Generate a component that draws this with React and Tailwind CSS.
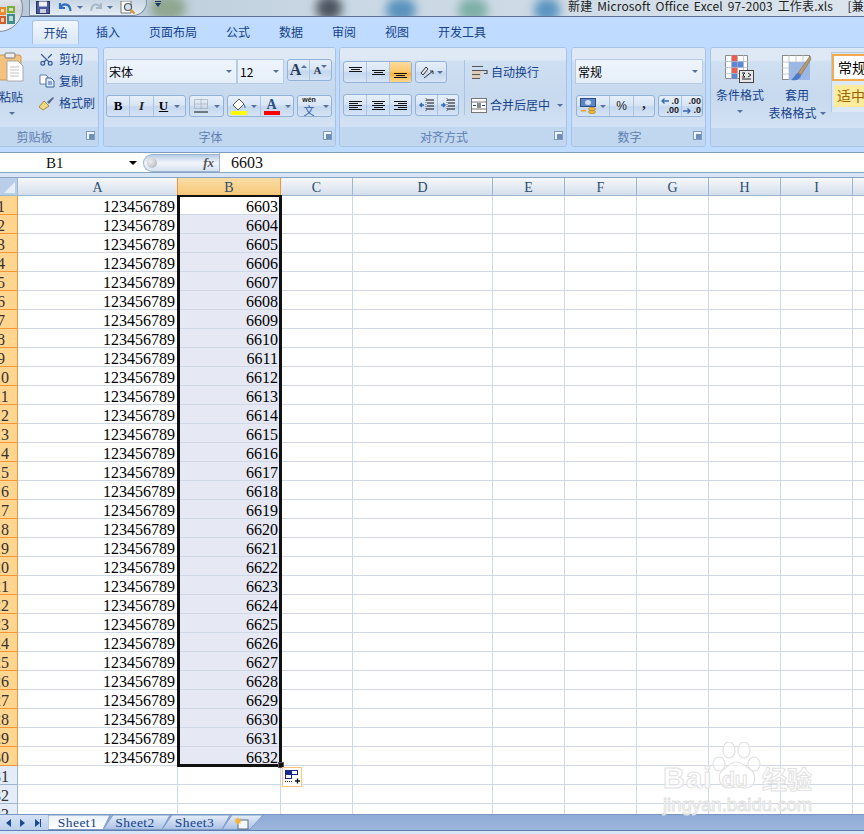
import React from "react";
import { Scissors } from "lucide-react";

const COLS = [160, 103, 72, 140, 72, 72, 72, 72, 72, 72];
const LETTERS = ["A", "B", "C", "D", "E", "F", "G", "H", "I", "J"];
const ROWS = Array.from({ length: 33 }, (_, i) => i + 1);
const CJK = "font-['Noto_Sans_CJK_SC','Noto_Sans',sans-serif]";
const SERIF = "font-['Liberation_Serif','Noto_Sans_CJK_SC',serif]";

function Arrow({ className = "" }) {
  return <span className={"inline-block w-0 h-0 border-x-[3.5px] border-x-transparent border-t-[3.5px] border-t-[#56719c] " + className} />;
}

function Group({ w, label, launcher = true, children, className = "" }) {
  return (
    <div className={"shrink-0 h-[100px] flex flex-col rounded-[3px] border border-[#a8c3e2] overflow-hidden " + className} style={{ width: w }}>
      <div className="h-[80px] relative bg-[linear-gradient(#dfe9f6_0,#dfe9f6_14%,#cfdff2_18%,#c7d9ee_60%,#d3e2f4_100%)]">{children}</div>
      <div className={"flex-1 relative flex items-center justify-center pt-[1px] pr-[18px] bg-[#c1d6ef] text-[12px] text-[#5d80b0] " + CJK}>
        {label}
        {launcher && (
          <svg className="absolute right-[3px] top-[4px]" width="9" height="9" viewBox="0 0 9 9">
            <rect x="0.5" y="0.5" width="8" height="8" fill="#eef4fb" stroke="#7f9cc0" />
            <rect x="3" y="3" width="5" height="5" fill="#6f8db5" />
          </svg>
        )}
      </div>
    </div>
  );
}

function BtnGroup({ children, className = "", h = "h-[22px]" }) {
  return <div className={"flex rounded-[3px] border border-[#93b2d8] bg-[linear-gradient(#e6eff9,#d8e5f5_45%,#c4d7ef_55%,#d6e4f5)] overflow-hidden " + h + " " + className}>{children}</div>;
}

function Cell({ w, last, active, children }) {
  return (
    <div className={"flex items-center justify-center gap-[3px] shrink-0 " + (last ? "" : "border-r border-[#adc5e2] ") + (active ? "bg-[linear-gradient(#fedb9c,#fdc869_50%,#fbb13a_55%,#fdd68a)]" : "")} style={{ width: w }}>
      {children}
    </div>
  );
}

function Lines({ rows, w = 16, h = 14 }) {
  return (
    <svg width={w} height={h} viewBox={`0 0 ${w} ${h}`}>
      {rows.map(([x1, x2, y], i) => (
        <line key={i} x1={x1} x2={x2} y1={y + 0.5} y2={y + 0.5} stroke="#111" strokeWidth="1" />
      ))}
    </svg>
  );
}

function Combo({ w, text }) {
  return (
    <div className="h-[25px] flex items-center justify-between pl-[2px] pr-[4px] bg-[linear-gradient(#eef4fc,#e6eff9)] border border-[#b5cbe6]" style={{ width: w }}>
      <span className={"text-[12px] text-black " + CJK}>{text}</span>
      <Arrow />
    </div>
  );
}

function Clipboard() {
  const Row = ({ icon, text }) => (
    <div className="h-[22px] flex items-center gap-[4px]">
      <span className="w-[17px] flex justify-center">{icon}</span>
      <span className={"text-[12px] text-[#15428b] " + CJK}>{text}</span>
    </div>
  );
  return (
    <Group w={111} label="剪贴板" className="-ml-[12px]">
      <div className="flex h-full pl-[12px]">
        <div className="w-[23px] relative shrink-0">
          <svg className="absolute -left-[3px] top-[4px]" width="28" height="32" viewBox="0 0 28 32">
            <rect x="1" y="3" width="22" height="25" rx="2" fill="#f3c27d" stroke="#c9975a" />
            <rect x="7" y="1" width="10" height="5" rx="1" fill="#eee" stroke="#7d7d7d" />
            <path d="M9 9h11l5 5v15H9z" fill="#fff" stroke="#a8a8a8" />
            <path d="M12 15h9M12 18h9M12 21h9M12 24h9" stroke="#c4c4c4" />
          </svg>
          <div className={"absolute -left-[2px] top-[41px] w-[28px] text-[12px] leading-[16px] text-[#15428b] whitespace-nowrap " + CJK}>粘贴</div>
          <Arrow className="absolute left-[8px] top-[64px]" />
        </div>
        <div className="ml-[14px] flex flex-col">
          <Row icon={<Scissors size={15} color="#3c5a94" className="rotate-[-90deg]" />} text="剪切" />
          <Row icon={
            <svg width="16" height="14" viewBox="0 0 16 14">
              <path d="M1 1h6l2 2v7H1z" fill="#fff" stroke="#5a7fb4" />
              <path d="M7 4h5l3 3v6H7z" fill="#dfeafa" stroke="#3e639c" />
              <path d="M9 8h4M9 10h4" stroke="#3e639c" />
            </svg>} text="复制" />
          <Row icon={
            <svg width="17" height="15" viewBox="0 0 17 15">
              <path d="M1 11l5-6 5 5-6 4z" fill="#f2d880" stroke="#a48a3c" />
              <path d="M9 6l6-5 1 1-5 6z" fill="#58698c" />
            </svg>} text="格式刷" />
        </div>
      </div>
    </Group>
  );
}

function FontGroup() {
  return (
    <Group w={233} label="字体">
      <div className="pt-[11px] pl-[2px] flex flex-col gap-[11px]">
        <div className="flex items-start">
          <Combo w={131} text="宋体" />
          <Combo w={47} text="12" />
          <BtnGroup className="ml-[3px]" h="h-[22px]">
            <Cell w={22}>
              <span className="font-['Liberation_Serif',serif] font-bold text-[16px] text-[#2b3a55]">A</span>
              <span className="-ml-[3px] -mt-[8px] w-0 h-0 border-x-[3px] border-x-transparent border-b-[3px] border-b-[#56719c]" />
            </Cell>
            <Cell w={21} last>
              <span className="font-['Liberation_Serif',serif] font-bold text-[11px] text-[#2b3a55]">A</span>
              <Arrow className="-ml-[3px] -mt-[8px]" />
            </Cell>
          </BtnGroup>
        </div>
        <div className="flex">
          <BtnGroup className="w-[80px]">
            <Cell w={23}><span className="font-['Liberation_Serif',serif] font-bold text-[13px] text-black">B</span></Cell>
            <Cell w={24}><span className="font-['Liberation_Serif',serif] italic font-bold text-[13px] text-[#222]">I</span></Cell>
            <Cell w={31} last><span className="font-['Liberation_Serif',serif] font-bold underline text-[13px] text-black">U</span><Arrow className="ml-[3px]" /></Cell>
          </BtnGroup>
          <BtnGroup className="w-[35px] ml-[3px]">
            <Cell w={33} last>
              <svg width="14" height="14" viewBox="0 0 14 14">
                <path d="M0.5 0.5h13v9h-13zM7 0.5v9M0.5 5h13" fill="none" stroke="#9a9a9a" strokeDasharray="1 1" />
                <line x1="0" x2="14" y1="13" y2="13" stroke="#111" />
              </svg>
              <Arrow className="ml-[3px]" />
            </Cell>
          </BtnGroup>
          <BtnGroup className="w-[67px] ml-[3px]">
            <Cell w={33}>
              <svg width="17" height="17" viewBox="0 0 17 17">
                <path d="M2 7l6-6 5 5-6 6z" fill="#fff" stroke="#555" />
                <path d="M13 6c2 2 2 4 1 4s-1-2-1-4z" fill="#4e79b6" />
                <rect x="0" y="13" width="16" height="4" fill="#ffff00" />
              </svg>
              <Arrow />
            </Cell>
            <Cell w={32} last>
              <div className="flex flex-col items-center w-[16px]">
                <span className="font-['Liberation_Serif',serif] font-bold text-[14px] leading-[13px] text-[#2c4d86]">A</span>
                <span className="w-[16px] h-[4px] bg-[#ff0000]" />
              </div>
              <Arrow className="ml-[2px]" />
            </Cell>
          </BtnGroup>
          <BtnGroup className="w-[35px] ml-[3px]">
            <Cell w={33} last>
              <div className="flex flex-col items-center w-[17px] leading-none">
                <span className="font-['Liberation_Sans',sans-serif] font-bold text-[7px] leading-[8px] text-[#222]">wén</span>
                <span className={"text-[11px] leading-[12px] text-[#2a57a5] " + CJK}>文</span>
              </div>
              <Arrow className="ml-[2px]" />
            </Cell>
          </BtnGroup>
        </div>
      </div>
    </Group>
  );
}

function AlignGroup() {
  return (
    <Group w={228} label="对齐方式">
      <div className="flex pl-[3px] pt-[13px]">
        <div className="flex flex-col gap-[11px] w-[116px]">
          <div className="flex">
            <BtnGroup className="w-[69px]">
              <Cell w={23}><Lines rows={[[1, 14, 2], [3, 12, 4], [1, 14, 6]]} h={14} w={15} /></Cell>
              <Cell w={23}><Lines rows={[[1, 14, 5], [3, 12, 7], [1, 14, 9]]} h={14} w={15} /></Cell>
              <Cell w={21} last active><Lines rows={[[1, 14, 8], [3, 12, 10], [1, 14, 12]]} h={14} w={15} /></Cell>
            </BtnGroup>
            <BtnGroup className="w-[32px] ml-[3px]">
              <Cell w={30} last>
                <svg width="15" height="15" viewBox="0 0 15 15">
                  <path d="M2 8l5-6 2 2-5 6z" fill="#dfe6f0" stroke="#333" />
                  <path d="M5 13l9-7M11 6h3v3" fill="none" stroke="#333" />
                </svg>
                <Arrow />
              </Cell>
            </BtnGroup>
          </div>
          <div className="flex">
            <BtnGroup className="w-[69px]">
              <Cell w={23}><Lines rows={[[1, 14, 2], [1, 10, 4], [1, 14, 6], [1, 10, 8], [1, 14, 10]]} h={13} w={15} /></Cell>
              <Cell w={23}><Lines rows={[[1, 14, 2], [3, 12, 4], [1, 14, 6], [3, 12, 8], [1, 14, 10]]} h={13} w={15} /></Cell>
              <Cell w={21} last><Lines rows={[[1, 14, 2], [5, 14, 4], [1, 14, 6], [5, 14, 8], [1, 14, 10]]} h={13} w={15} /></Cell>
            </BtnGroup>
            <BtnGroup className="w-[44px] ml-[3px]">
              <Cell w={22}>
                <svg width="16" height="14" viewBox="0 0 16 14">
                  <path d="M7 2h8M8 5h7M8 8h7M7 11h8" stroke="#111" strokeWidth="1.2" />
                  <path d="M7 0v14" stroke="#111" strokeWidth="0.6" strokeDasharray="1 1" />
                  <path d="M5 7H1M3 5L1 7l2 2" fill="none" stroke="#3467b5" strokeWidth="1.4" />
                </svg>
              </Cell>
              <Cell w={20} last>
                <svg width="16" height="14" viewBox="0 0 16 14">
                  <path d="M7 2h8M8 5h7M8 8h7M7 11h8" stroke="#111" strokeWidth="1.2" />
                  <path d="M7 0v14" stroke="#111" strokeWidth="0.6" strokeDasharray="1 1" />
                  <path d="M1 7h4M3 5l2 2-2 2" fill="none" stroke="#3467b5" strokeWidth="1.4" />
                </svg>
              </Cell>
            </BtnGroup>
          </div>
        </div>
        <div className="w-px h-[55px] bg-[#aac3e0] ml-[5px] -mt-[1px]" />
        <div className="ml-[6px] flex flex-col gap-[11px]">
          <div className="h-[22px] flex items-center gap-[3px]">
            <svg width="17" height="15" viewBox="0 0 17 15">
              <rect x="1" y="5" width="9" height="8" fill="#e8c28b" fillOpacity="0.6" />
              <path d="M1 1.5h11M1 5.5h15v3h-3M1 9.5h8M1 13.5h8" fill="none" stroke="#555" strokeWidth="1.2" />
            </svg>
            <span className={"text-[12px] text-[#15428b] " + CJK}>自动换行</span>
          </div>
          <div className="h-[22px] flex items-center gap-[3px]">
            <svg width="16" height="15" viewBox="0 0 16 15">
              <rect x="0.5" y="0.5" width="15" height="14" fill="#fff" stroke="#777" />
              <path d="M0 4h16M0 11h16" stroke="#777" />
              <path d="M2 7.5h3M11 7.5h3" stroke="#234d8b" strokeWidth="1.2" />
              <rect x="6" y="5" width="4" height="5" fill="#888" />
            </svg>
            <span className={"text-[12px] text-[#15428b] " + CJK}>合并后居中</span>
            <Arrow className="ml-[4px]" />
          </div>
        </div>
      </div>
    </Group>
  );
}

function NumberGroup() {
  return (
    <Group w={135} label="数字">
      <div className="pt-[11px] pl-[3px] flex flex-col gap-[11px]">
        <Combo w={128} text="常规" />
        <div className="flex pl-[1px]">
          <BtnGroup className="w-[79px]">
            <Cell w={33}>
              <svg width="17" height="16" viewBox="0 0 17 16">
                <rect x="0.5" y="0.5" width="15" height="8" fill="#5f86c4" stroke="#2e4f88" />
                <ellipse cx="8" cy="4.5" rx="3" ry="2.5" fill="#cfe0f6" />
                <ellipse cx="12" cy="11" rx="3.5" ry="1.7" fill="#eeb63c" stroke="#9a7416" strokeWidth="0.5" />
                <ellipse cx="12" cy="14" rx="3.5" ry="1.7" fill="#eeb63c" stroke="#9a7416" strokeWidth="0.5" />
                <rect x="1" y="12" width="5" height="1.5" fill="#e0a42f" />
              </svg>
              <Arrow />
            </Cell>
            <Cell w={24}><span className="font-['Liberation_Sans',sans-serif] text-[12px] text-[#222]">%</span></Cell>
            <Cell w={20} last><span className="font-['Liberation_Serif',serif] font-bold text-[14px] -mt-[5px] text-[#222]">,</span></Cell>
          </BtnGroup>
          <BtnGroup className="w-[45px] ml-[3px]">
            <Cell w={23}>
              <div className="font-['Liberation_Sans',sans-serif] font-bold text-[9px] leading-[9px] text-[#222] text-right w-[18px] relative">
                <svg className="absolute left-0 top-[1px]" width="8" height="6" viewBox="0 0 8 6">
                  <path d="M8 3H1M3.5 0.5L1 3l2.5 2.5" fill="none" stroke="#3467b5" strokeWidth="1.3" />
                </svg>
                .0<br />.00
              </div>
            </Cell>
            <Cell w={20} last>
              <div className="font-['Liberation_Sans',sans-serif] font-bold text-[9px] leading-[9px] text-[#222] text-right w-[18px] relative">
                .00<br />.0
                <svg className="absolute left-0 bottom-[1px]" width="8" height="6" viewBox="0 0 8 6">
                  <path d="M0 3h7M4.5 0.5L7 3 4.5 5.5" fill="none" stroke="#3467b5" strokeWidth="1.3" />
                </svg>
              </div>
            </Cell>
          </BtnGroup>
        </div>
      </div>
    </Group>
  );
}

function StylesGroup() {
  return (
    <Group w={170} label="" launcher={false}>
      <div className="flex h-full">
        <div className="w-[58px] shrink-0 flex flex-col items-center pt-[7px]">
          <svg width="30" height="28" viewBox="0 0 30 28">
            <path d="M0.5 0.5h22v23h-22z" fill="#fff" stroke="#8b8b8b" />
            <rect x="6.5" y="0.5" width="6" height="6" fill="#ef5a4f" />
            <rect x="6.5" y="6.5" width="12" height="6" fill="#5d87d6" />
            <rect x="6.5" y="12.5" width="6" height="6" fill="#ef5a4f" />
            <rect x="6.5" y="18.5" width="6" height="5" fill="#5d87d6" />
            <path d="M6.5 0v24M12.5 0v24M18.5 0v24M0 6.5h23M0 12.5h23M0 18.5h23" stroke="#a8b4c4" strokeWidth="0.7" />
            <rect x="14.5" y="15.5" width="14" height="12" fill="#e8e8e8" stroke="#444" />
            <path d="M17 18h3l-2 2 2 2h-3M23 18l3 2-3 2M17 24h9" fill="none" stroke="#222" />
          </svg>
          <span className={"mt-[3px] text-[12px] leading-[18px] text-[#15428b] whitespace-nowrap " + CJK}>条件格式</span>
          <Arrow className="mt-[6px]" />
        </div>
        <div className="w-[56px] shrink-0 flex flex-col items-center pt-[7px]">
          <svg width="30" height="28" viewBox="0 0 30 28">
            <rect x="0.5" y="0.5" width="27" height="24" fill="#fff" stroke="#8b8b8b" />
            <rect x="7" y="7" width="21" height="18" fill="#9bb8ec" />
            <path d="M7 0v25M14 0v25M21 0v25M0 7h28M0 13h28M0 19h28" stroke="#a8b4c4" strokeWidth="0.7" />
            <path d="M28 1L16 18l3 2L29 4z" fill="#b99a6a" stroke="#6f5a3a" strokeWidth="0.5" />
            <path d="M16 18c-3 1-4 5-7 7 5 1 10-1 10-5z" fill="#4e79c4" />
          </svg>
          <span className={"mt-[3px] text-[12px] leading-[18px] text-[#15428b] " + CJK}>套用</span>
          <div className="flex items-center whitespace-nowrap">
            <span className={"text-[12px] leading-[18px] text-[#15428b] " + CJK}>表格格式</span>
            <Arrow className="ml-[3px]" />
          </div>
        </div>
        <div className="ml-[6px] border-l border-t border-[#b3cae6] mt-[4px] w-[60px] h-[60px] bg-[#dce8f6] flex flex-col shrink-0">
          <div className={"mt-[1px] h-[27px] border-2 border-[#f5a94a] bg-white text-[14px] leading-[22px] text-black pl-[4px] whitespace-nowrap " + CJK}>常规</div>
          <div className={"mt-[4px] ml-[2px] h-[22px] bg-[#ffeb9c] text-[14px] leading-[20px] text-[#9c6500] pl-[3px] whitespace-nowrap " + CJK}>适中</div>
        </div>
      </div>
    </Group>
  );
}

function TitleBar() {
  return (
    <div className="h-[17px] shrink-0 relative overflow-hidden border-b border-[#5f7390] bg-[linear-gradient(90deg,#b9c8d6,#c9d8e4_40%,#cfdbe6_65%,#dce5ed)]">
      <div className="absolute left-[150px] -top-[4px] w-[36px] h-[24px] rounded-full bg-[#8fa68f] blur-[5px]" />
      <div className="absolute left-[316px] -top-[4px] w-[26px] h-[24px] rounded-full bg-[#4d5560] blur-[5px]" />
      <div className="absolute left-[386px] -top-[2px] w-[30px] h-[24px] rounded-full bg-[#5b93bd] blur-[5px]" />
      <div className="absolute left-[458px] -top-[2px] w-[30px] h-[24px] rounded-full bg-[#7fb0a8] blur-[5px]" />
      <div className="absolute left-[534px] -top-[2px] w-[26px] h-[24px] rounded-full bg-[#5a95c0] blur-[5px]" />
      <div className={"relative pl-[568px] text-[12px] leading-[12px] tracking-[0.15px] [word-spacing:2px] text-[#222] whitespace-nowrap " + CJK}>新建 Microsoft Office Excel 97-2003 工作表.xls&nbsp;&nbsp;&nbsp;[兼容模式]</div>
    </div>
  );
}

function Qat() {
  return (
    <div className="absolute left-[29px] top-0 h-[16px] w-[118px] rounded-br-[14px] border-r border-b border-l border-[#7f91a8] bg-[linear-gradient(#c9d6e4,#e4ecf4)] flex items-center pl-[6px]">
      <svg width="14" height="13" viewBox="0 0 14 13">
        <rect x="0.5" y="0.5" width="13" height="12" fill="#4c5a9c" stroke="#2a3468" />
        <rect x="3" y="0.5" width="8" height="5" fill="#eef2f8" />
        <rect x="4" y="8" width="6" height="4" fill="#c8cfe0" />
      </svg>
      <svg width="15" height="13" viewBox="0 0 15 13" className="ml-[8px]">
        <path d="M2 2v5h5M2.5 6.5C5 2 12 2 12.5 10" fill="none" stroke="#2d6fc0" strokeWidth="2.2" />
      </svg>
      <Arrow className="ml-[4px]" />
      <svg width="14" height="13" viewBox="0 0 14 13" className="ml-[6px]">
        <path d="M12 2v5H7M11.5 6.5C9 2 3 2 2 10" fill="none" stroke="#a8b8c8" strokeWidth="2" />
      </svg>
      <Arrow className="ml-[4px] border-t-[#9aa8b8]" />
      <svg width="16" height="14" viewBox="0 0 16 14" className="ml-[7px]">
        <path d="M1 0h10v12H1z" fill="#fff" stroke="#777" />
        <circle cx="8" cy="6" r="3.5" fill="#cfe0f2" stroke="#555" strokeWidth="1.2" />
        <path d="M10.5 8.5l4 4" stroke="#d8932c" strokeWidth="2.2" />
      </svg>
      <div className="absolute -right-[15px] top-[1px] w-[7px] flex flex-col items-center gap-[1px]">
        <span className="w-[6px] h-px bg-[#1f3a68]" />
        <span className="w-0 h-0 border-x-[3px] border-x-transparent border-t-[4px] border-t-[#1f3a68]" />
      </div>
    </div>
  );
}

function OfficeButton() {
  return (
    <div className="absolute -left-[25px] -top-[16px] w-[48px] h-[48px] rounded-full border border-[#7f8a9a] bg-[linear-gradient(#fafbfc,#d0d5dc_55%,#f2f4f7)] flex items-center justify-center">
      <svg width="17" height="20" viewBox="0 0 17 20" className="ml-[17px] mt-[16px]">
        <rect x="0" y="1" width="7" height="8" fill="#e98a2a" />
        <rect x="8" y="0" width="8" height="7" fill="#7dab3c" />
        <rect x="0" y="10" width="7" height="8" fill="#d35b2a" />
        <rect x="8" y="8" width="8" height="10" fill="#3f8d8c" />
        <path d="M2 3h3v3H2zM10 2h4v3h-4zM2 12h3v4H2zM10 10h4v5h-4z" fill="#fff" fillOpacity="0.65" />
      </svg>
    </div>
  );
}

function TabsRow() {
  const tabs = ["插入", "页面布局", "公式", "数据", "审阅", "视图", "开发工具"];
  return (
    <div className={"h-[27px] shrink-0 bg-[#bfdbff] flex items-end pl-[32px] text-[12px] text-[#15428b] " + CJK}>
      <div className="h-[24px] w-[47px] flex items-center justify-center rounded-t-[3px] border border-b-0 border-[#a5c3e8] bg-[linear-gradient(#f2f7fd,#d9e7f7)]">开始</div>
      <div className="flex gap-[29px] ml-[17px] h-[24px] items-center">
        {tabs.map((t) => <span key={t}>{t}</span>)}
      </div>
    </div>
  );
}

function Ribbon() {
  return (
    <div className="h-[109px] shrink-0 bg-[#bfdbff] border-b border-[#7f9db9] flex items-start pt-[3px]">
      <Clipboard />
      <div className="ml-[4px]"><FontGroup /></div>
      <div className="ml-[3px]"><AlignGroup /></div>
      <div className="ml-[4px]"><NumberGroup /></div>
      <div className="ml-[4px]"><StylesGroup /></div>
    </div>
  );
}

function FormulaBar() {
  return (
    <div className={"h-[20px] shrink-0 bg-white border-b border-[#8aa5c4] flex items-center text-[16px] text-[#111] " + SERIF}>
      <div className="w-[143px] h-full flex items-center pl-[46px] pt-[1px] relative text-[15px]">
        B1
        <span className="absolute left-[129px] top-[8px] w-0 h-0 border-x-[4px] border-x-transparent border-t-[4px] border-t-black" />
      </div>
      <div className="w-[76px] h-[18px] rounded-l-full border border-r-0 border-[#9db4d0] bg-[linear-gradient(#b9cde6,#f2f6fb_50%,#d5e1f0)] flex items-center justify-between pr-[5px] pl-[3px]">
        <span className="w-[10px] h-[10px] rounded-full bg-[radial-gradient(circle_at_35%_35%,#eee,#a8adb5)]" />
        <span className="font-['Liberation_Serif',serif] italic font-bold text-[13px] leading-[14px] text-[#555]">fx</span>
      </div>
      <div className="h-full w-px bg-[#9db4d0]" />
      <span className="ml-[11px] pt-[1px]">6603</span>
    </div>
  );
}

function HeaderRow() {
  return (
    <div className={"h-[19px] shrink-0 flex border-t border-[#8aa5c4] text-[14px] text-[#2d4d6e] " + SERIF}>
      <div className="w-[18px] shrink-0 relative bg-[#b9cfe9] border-r border-b border-[#9eb6ce]">
        <span className="absolute right-[2px] bottom-[2px] w-0 h-0 border-l-[11px] border-l-transparent border-b-[11px] border-b-[#e6eef8]" />
      </div>
      {COLS.map((w, i) => (
        <div key={i} style={{ width: w }} className={"shrink-0 flex items-center justify-center pt-[1px] border-r border-b " + (i === 1 ? "border-[#f29536] bg-[linear-gradient(#f9dda6,#f6c878)] " : i === 0 ? "border-b-[#9eb6ce] border-r-[#f29536] bg-[linear-gradient(#f6f8fb,#d5dfec)]" : "border-[#9eb6ce] bg-[linear-gradient(#f6f8fb,#d5dfec)]")}>
          {LETTERS[i]}
        </div>
      ))}
    </div>
  );
}

function SheetRow({ n }) {
  const on = n <= 30;
  return (
    <div className={"h-[19px] shrink-0 flex text-[16px] leading-[21px] text-black " + SERIF}>
      <div className={"w-[18px] shrink-0 overflow-hidden border-r border-b text-[#333] " + (on ? "bg-[#ffd58f] border-[#f29536]" : "bg-[#e4ecf7] border-[#9eb6ce]")}>
        <div className="-ml-[16px] w-[34px] text-center">{n}</div>
      </div>
      {COLS.map((w, i) => (
        <div key={i} style={{ width: w }} className={"shrink-0 border-r border-b border-[#d0d7e5] text-right pr-[2px] " + (i === 1 && on && n > 1 ? "bg-[#e6e9f4]" : "bg-white")}>
          {on && i === 0 ? "123456789" : on && i === 1 ? 6602 + n : ""}
        </div>
      ))}
    </div>
  );
}

function Watermark() {
  const stroke = "[-webkit-text-stroke:1px_#e2e2e2] text-white/70";
  return (
    <div className="absolute left-[663px] top-[742px] w-[156px] h-[72px] pointer-events-none">
      <svg className="absolute left-[48px] top-0" width="52" height="48" viewBox="0 0 52 48" fill="#ffffff" fillOpacity="0.6" stroke="#e2e2e2" strokeWidth="1.2">
        <ellipse cx="8" cy="22" rx="6" ry="7" />
        <ellipse cx="18" cy="8" rx="6" ry="8" />
        <ellipse cx="33" cy="8" rx="6" ry="8" />
        <ellipse cx="43" cy="22" rx="6" ry="7" />
        <path d="M25 20c-6 0-8 5-13 8-6 4-5 18 6 18 3 0 5-1 8-1s5 1 8 1c11 0 12-13 6-18-5-3-9-8-15-8z" />
      </svg>
      <span className={"absolute left-0 top-[20px] font-['Liberation_Sans',sans-serif] font-bold text-[30px] leading-[32px] tracking-[1px] " + stroke}>Bai</span>
      <span className={"absolute left-[59px] top-[26px] font-['Liberation_Sans',sans-serif] font-bold text-[21px] leading-[22px] " + stroke}>du</span>
      <span className={"absolute left-[99px] top-[22px] font-bold text-[25px] leading-[28px] " + CJK + " " + stroke}>经验</span>
      <span className={"absolute left-0 top-[54px] font-['Liberation_Sans',sans-serif] text-[18.5px] leading-[18px] whitespace-nowrap " + stroke}>jingyan.baidu.com</span>
    </div>
  );
}

function SheetTab({ w, poly, active, children, className = "" }) {
  const id = "g" + w + (active ? "a" : "b");
  return (
    <div className={"relative h-[15px] shrink-0 flex items-center justify-center " + className} style={{ width: w }}>
      <svg className="absolute inset-0" width={w} height="15" viewBox={`0 0 ${w} 15`}>
        <defs>
          <linearGradient id={id} x1="0" y1="0" x2="0" y2="1">
            <stop offset="0" stopColor={active ? "#eaf1fb" : "#e6eefa"} />
            <stop offset="1" stopColor={active ? "#ffffff" : "#a9c1e6"} />
          </linearGradient>
        </defs>
        <polygon points={poly} fill={`url(#${id})`} stroke="#7f9bc6" />
      </svg>
      <span className={"relative text-[13.5px] tracking-[0.5px] leading-[15px] -ml-[3px] text-[#15428b] " + SERIF}>{children}</span>
    </div>
  );
}

function SheetTabs() {
  return (
    <div className="h-[16px] shrink-0 flex items-start bg-[linear-gradient(#8eabd6,#9db6dc)] border-t border-[#7a97c4]">
      <div className="w-[48px] h-[15px] shrink-0 flex items-center gap-[7px] pl-[6px] bg-[linear-gradient(#d4e2f5,#bcd0ec)]">
        <span className="w-0 h-0 border-y-[4px] border-y-transparent border-r-[5px] border-r-[#1f4a8c]" />
        <span className="w-0 h-0 ml-[2px] border-y-[4px] border-y-transparent border-l-[5px] border-l-[#1f4a8c]" />
        <span className="flex items-center ml-[3px]">
          <span className="w-0 h-0 border-y-[4px] border-y-transparent border-l-[5px] border-l-[#1f4a8c]" />
          <span className="w-px h-[8px] bg-[#1f4a8c]" />
        </span>
      </div>
      <SheetTab w={62} poly="0,0 62,0 55,14.5 0,14.5" active className="z-30">Sheet1</SheetTab>
      <SheetTab w={67} poly="10,0 67,0 59,14.5 0,14.5" className="-ml-[7px] z-20">Sheet2</SheetTab>
      <SheetTab w={68} poly="10,0 68,0 60,14.5 0,14.5" className="-ml-[8px] z-10">Sheet3</SheetTab>
      <SheetTab w={41} poly="10,0 41,0 28,14.5 0,14.5" className="-ml-[8px]">
        <svg width="15" height="13" viewBox="0 0 15 13" className="inline-block">
          <rect x="4" y="3" width="10" height="9" fill="#f4f7fb" stroke="#5d6d86" />
          <path d="M4 0l1 2 2-1-1 2 2 1-2 1 1 2-2-1-1 2-1-2-2 1 1-2-2-1 2-1-1-2 2 1z" fill="#f2b33c" />
        </svg>
      </SheetTab>
    </div>
  );
}

export default function App() {
  return (
    <div className="w-[864px] h-[834px] relative overflow-hidden bg-[#dbe7f5] flex flex-col">
      <TitleBar />
      <TabsRow />
      <Ribbon />
      <FormulaBar />
      <div className="h-[4px] shrink-0 bg-[#d9e6f5]" />
      <HeaderRow />
      <div className="flex-1 min-h-0 overflow-hidden flex flex-col bg-white">
        {ROWS.map((n) => <SheetRow key={n} n={n} />)}
      </div>
      <SheetTabs />
      <div className="h-[4px] shrink-0 bg-[#d6e5f8] border-t border-[#5f7fae]" />

      <Qat />
      <OfficeButton />

      <div className="absolute left-[177px] top-[195px] w-[105px] h-[572px] border-[3px] border-t-2 border-[#111] pointer-events-none" />
      <div className="absolute left-[278px] top-[762px] w-[6px] h-[6px] bg-[#111] border border-white/30" />
      <div className="absolute left-[282px] top-[767px] w-[20px] h-[20px] bg-white border border-[#fbc37b] flex items-center justify-center">
        <svg width="15" height="14" viewBox="0 0 15 14">
          <rect x="0.5" y="0.5" width="6" height="4" fill="#1a2a8c" stroke="#1a2a8c" />
          <rect x="6.5" y="0.5" width="6" height="4" fill="#fff" stroke="#1a2a8c" />
          <rect x="0.5" y="4.5" width="6" height="4" fill="#fff" stroke="#1a2a8c" />
          <path d="M0 11.5h8" stroke="#222" strokeDasharray="1 1" />
          <path d="M10 11h5M12.5 8.5v5" stroke="#111" strokeWidth="1.3" />
        </svg>
      </div>
      <Watermark />
    </div>
  );
}
